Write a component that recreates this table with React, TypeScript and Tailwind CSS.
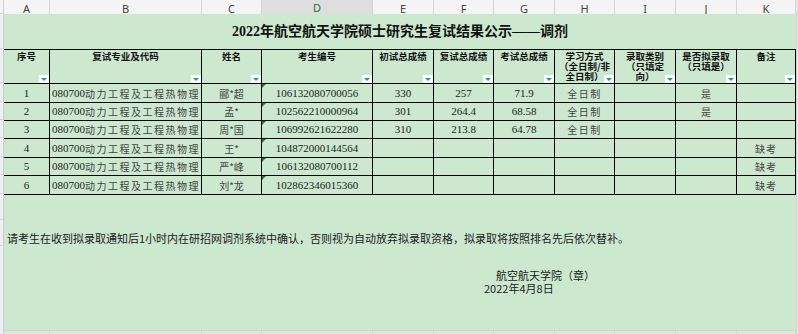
const COLS = "grid-cols-[45px_151px_59px_110px_60px_59px_60px_59px_60px_60px_58px]";
const LETTERS = ["A", "B", "C", "D", "E", "F", "G", "H", "I", "J", "K"];

interface Row {
    n: string;
    name: string;
    id: string;
    first?: string;
    retest?: string;
    total?: string;
    mode?: string;
    yes?: string;
    note?: string;
}

const rows: Row[] = [
    { n: "1", name: "郦*超", id: "106132080700056", first: "330", retest: "257", total: "71.9", mode: "全日制", yes: "是" },
    { n: "2", name: "孟*", id: "102562210000964", first: "301", retest: "264.4", total: "68.58", mode: "全日制", yes: "是" },
    { n: "3", name: "周*国", id: "106992621622280", first: "310", retest: "213.8", total: "64.78", mode: "全日制" },
    { n: "4", name: "王*", id: "104872000144564", note: "缺考" },
    { n: "5", name: "严*峰", id: "106132080700112", note: "缺考" },
    { n: "6", name: "刘*龙", id: "102862346015360", note: "缺考" },
];

const headers: string[][] = [
    ["序号"],
    ["复试专业及代码"],
    ["姓名"],
    ["考生编号"],
    ["初试总成绩"],
    ["复试总成绩"],
    ["考试总成绩"],
    ["学习方式", "（全日制/非", "全日制）"],
    ["录取类别", "（只填定", "向）"],
    ["是否拟录取", "（只填是）"],
    ["备注"],
];

function FilterButton() {
    return (
        <div className="absolute right-0 bottom-0 w-[10px] h-[8px] bg-white flex items-center justify-center">
            <div className="w-0 h-0 border-l-[3px] border-r-[3px] border-t-[3px] border-l-transparent border-r-transparent border-t-[#23a06a]" />
        </div>
    );
}

function HeaderCell({ lines }: { lines: string[] }) {
    return (
        <div className="relative bg-[#cce8cf] pt-px text-center text-[9.5px] leading-[10px] font-bold text-[#111] font-['Noto_Sans_CJK_SC',sans-serif]">
            {lines.map((l, i) => (
                <div key={i} className="h-[10px] overflow-visible">{l}</div>
            ))}
            <FilterButton />
        </div>
    );
}

function Cell({ children, className = "" }: { children?: React.ReactNode; className?: string }) {
    return (
        <div className={`relative bg-[#cce8cf] flex items-center justify-center text-[#222] ${className}`}>
            {children}
        </div>
    );
}

const digits = "font-['Liberation_Serif','Noto_Sans_CJK_SC',serif] text-[11px]";
const cjk = "font-['Noto_Sans_CJK_SC',sans-serif] text-[10px] text-[#444]";

export default function App() {
    return (
        <div className="w-[798px] h-[334px] overflow-hidden bg-white flex flex-col select-none">
            {/* column letters */}
            <div className="flex h-[14px] border-b border-[#cfcfcf] bg-[#f4f4f4]">
                <div className="w-[4px] border-r border-[#cfcfcf]" />
                <div className={`grid ${COLS} gap-px bg-[#d6d6d6] pr-px`}>
                    {LETTERS.map((l) => (
                        <div
                            key={l}
                            className={
                                l === "D"
                                    ? "bg-[#dedede] text-[#217346] border-b-2 border-[#217346] -mb-px flex items-center justify-center text-[11px] font-['Noto_Sans',sans-serif]"
                                    : "bg-[#f4f4f4] text-[#444] flex items-center justify-center text-[11px] font-['Noto_Sans',sans-serif]"
                            }
                        >
                            {l}
                        </div>
                    ))}
                </div>
                <div className="w-[2px] bg-[#e6e6e6]" />
            </div>

            <div className="flex flex-1">
                {/* row header strip */}
                <div className="w-[4px] bg-[#eceef2] border-r border-[#c9ccd2] flex flex-col">
                    <div className="h-[35px] border-b border-[#d3d6db]" />
                    <div className="h-[34px] border-b border-[#d3d6db]" />
                    <div className="h-[19px] border-b border-[#d3d6db]" />
                    <div className="h-[18px] border-b border-[#d3d6db]" />
                    <div className="h-[18px] border-b border-[#d3d6db]" />
                    <div className="h-[19px] border-b border-[#d3d6db]" />
                    <div className="h-[18px] border-b border-[#d3d6db]" />
                    <div className="h-[19px] border-b border-[#d3d6db]" />
                    <div className="h-[26px] border-b border-[#d3d6db]" />
                    <div className="h-[26px] border-b border-[#d3d6db]" />
                </div>

                <div className="w-[792px] flex flex-col">
                    {/* title */}
                    <div className="h-[35px] bg-[#cce8cf] flex items-center justify-center">
                        <span className="text-[14px] font-bold text-[#111] font-['Liberation_Serif','Noto_Sans_CJK_SC',serif]">
                            2022年航空航天学院硕士研究生复试结果公示——调剂
                        </span>
                    </div>

                    {/* table */}
                    <div className={`grid ${COLS} grid-rows-[33px_18px_17px_17px_18px_17px_18px] gap-px bg-black py-px pr-px`}>
                        {headers.map((h, i) => (
                            <HeaderCell key={i} lines={h} />
                        ))}
                        {rows.map((r) => (
                            <div key={r.n} className="contents">
                                <Cell className={digits}>{r.n}</Cell>
                                <Cell className="!justify-start pl-[2px]">
                                    <span className={digits + " text-[10.5px]"}>080700</span>
                                    <span className={cjk + " tracking-[1.5px]"}>动力工程及工程热物理</span>
                                </Cell>
                                <Cell className={cjk}>{r.name}</Cell>
                                <Cell className={digits}>
                                    <div className="absolute top-0 left-0 w-0 h-0 border-t-[4px] border-r-[4px] border-t-[#1f7a3a] border-r-transparent" />
                                    {r.id}
                                </Cell>
                                <Cell className={digits}>{r.first}</Cell>
                                <Cell className={digits}>{r.retest}</Cell>
                                <Cell className={digits}>{r.total}</Cell>
                                <Cell className={cjk + " tracking-[1.5px]"}>{r.mode}</Cell>
                                <Cell />
                                <Cell className={cjk}>{r.yes}</Cell>
                                <Cell className={cjk + " tracking-[1px]"}>{r.note}</Cell>
                            </div>
                        ))}
                    </div>

                    {/* footer note */}
                    <div className="h-[135px] bg-[#cce8cf] flex flex-col text-[11px] text-[#222] font-['Noto_Sans_CJK_SC',sans-serif]">
                        <div className="mt-[36px] pl-[3px] leading-[14px]">
                            请考生在收到拟录取通知后1小时内在研招网调剂系统中确认，否则视为自动放弃拟录取资格，拟录取将按照排名先后依次替补。
                        </div>
                        <div className="mt-[24px] pl-[492px] leading-[13px]">航空航天学院（章）</div>
                        <div className="pl-[480px] leading-[13px]">2022年4月8日</div>
                    </div>

                    {/* next empty row */}
                    <div className={`grid ${COLS} gap-px bg-[#c9d5d9] pt-px pr-px h-[4px]`}>
                        {LETTERS.map((l) => (
                            <div key={l} className="bg-[#d6ecd9]" />
                        ))}
                    </div>
                </div>

                <div className="w-[2px] bg-[#e4ebe6] border-l border-[#c9d5d9]" />
            </div>
        </div>
    );
}
